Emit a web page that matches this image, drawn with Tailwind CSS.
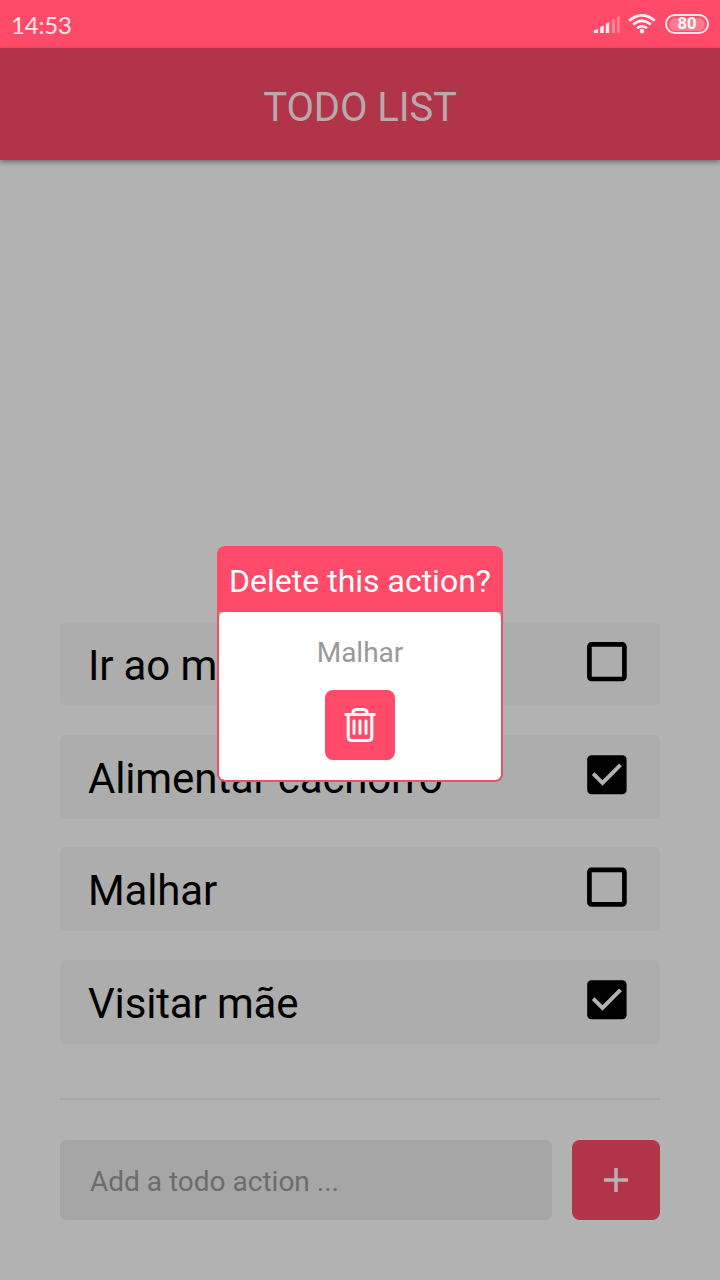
<!DOCTYPE html>
<html lang="pt">
<head>
<meta charset="utf-8">
<title>Todo List</title>
<script src="https://cdn.jsdelivr.net/npm/@tailwindcss/browser@4"></script>
</head>
<body class="w-[720px] h-[1280px] overflow-hidden bg-[#b2b2b2] font-[Roboto,sans-serif] relative flex flex-col">
  <!-- Status bar -->
  <div class="h-12 shrink-0 bg-[#ff4b69] flex items-center justify-between pl-[11px] pr-[11px]">
    <span class="font-[Lato,sans-serif] text-[24px] leading-none text-[#ffe4e8] tracking-[-0.2px] pt-[2px]">14:53</span>
    <div class="flex items-center">
      <svg class="w-[28px] h-5" viewBox="0 0 28 20" fill="#ffe9ec">
        <path d="M.8 19v-1.800q0-1 1-1.300l3.400-1V19z"/>
        <path d="M7.200 19v-6l3.600-1.500V19z"/>
        <path d="M12.800 19V9.700l3.400-1.500V19z"/>
        <path d="M18.800 19V6l3.300-1.300V19z" opacity=".35"/>
        <path d="M24 19V3l2.600-1.200V19z" opacity=".35"/>
      </svg>
      <svg class="w-[28px] h-5 ml-[7px]" viewBox="0 0 28 20" fill="none" stroke="#ffeff1" stroke-width="2.700">
        <path d="M1.200 6.800Q14-4.300 26.800 6.800"/>
        <path d="M5.200 10.600Q14 3 22.800 10.600"/>
        <path d="M9 14.300Q14 9.900 19 14.300"/>
        <circle cx="14" cy="17.100" r="2.300" fill="#ffeff1" stroke="none"/>
      </svg>
      <div class="ml-[9px] w-[44px] h-5 rounded-full border-2 border-[#ffe6ea] flex items-center p-[2px]">
        <div class="w-full h-[13px] rounded-full bg-[#ff7b90] flex items-center justify-center"><span class="text-[16.5px] leading-none font-bold text-white">80</span></div>
      </div>
    </div>
  </div>
  <!-- App header -->
  <header class="h-28 shrink-0 bg-[#b13449] flex items-center justify-center shadow-[0_2px_5px_rgba(0,0,0,0.4)]">
    <h1 class="text-[40px] leading-none text-[#b9a9ab] pt-[8px] tracking-[-0.1px]">TODO LIST</h1>
  </header>
  <!-- Todo items -->
  <main class="flex-1 flex flex-col justify-end px-[60px] pb-[60px]">
    <ul class="flex flex-col gap-[28.67px]">
      <li class="h-[84px] rounded-md bg-[#adadad] flex items-center justify-between pl-7 pr-[33px]">
        <span class="text-[42px] leading-none text-black pt-[3px] tracking-[-0.15px]">Ir ao m</span>
        <svg class="w-10 h-10 mb-[4px]" viewBox="0 0 40 40"><rect x="2.400" y="2.400" width="35" height="34.600" rx="2.200" fill="none" stroke="#000" stroke-width="4.700"/></svg>
      </li>
      <li class="h-[84px] rounded-md bg-[#adadad] flex items-center justify-between pl-7 pr-[33px]">
        <span class="text-[42px] leading-none text-black pt-[4px] tracking-[-0.15px]">Alimentar cachorro</span>
        <svg class="w-10 h-10 mb-[4px]" viewBox="0 0 40 40"><rect x=".2" y=".2" width="39.400" height="39" rx="4.200"/><path d="M6.200 18.600l9.300 9.300L33.500 9.900" fill="none" stroke="#b2b2b2" stroke-width="3.900"/></svg>
      </li>
      <li class="h-[84px] rounded-md bg-[#adadad] flex items-center justify-between pl-7 pr-[33px]">
        <span class="text-[42px] leading-none text-black pt-[3px] tracking-[-0.15px]">Malhar</span>
        <svg class="w-10 h-10 mb-[4px]" viewBox="0 0 40 40"><rect x="2.400" y="2.800" width="35" height="34.600" rx="2.200" fill="none" stroke="#000" stroke-width="4.700"/></svg>
      </li>
      <li class="h-[84px] rounded-md bg-[#adadad] flex items-center justify-between pl-7 pr-[33px]">
        <span class="text-[42px] leading-none text-black pt-[3px] tracking-[-0.15px]">Visitar mãe</span>
        <svg class="w-10 h-10 mb-[4px]" viewBox="0 0 40 40"><rect x=".2" y=".2" width="39.400" height="39" rx="4.200"/><path d="M6.200 18.600l9.300 9.300L33.500 9.900" fill="none" stroke="#b2b2b2" stroke-width="3.900"/></svg>
      </li>
    </ul>
    <div class="h-[2px] mt-[54px] bg-[#a6a6a6]"></div>
    <div class="mt-10 h-20 flex gap-5">
      <div class="flex-1 rounded-md bg-[#a6a6a6] flex items-center pl-[30px]"><span class="text-[28px] leading-none text-[#6c6c6c] pt-[3px]">Add a todo action ...</span></div>
      <div class="w-[88px] rounded-lg bg-[#b13449] flex items-center justify-center">
        <svg class="w-6 h-6" viewBox="0 0 24 24" stroke="#bbb0b2" stroke-width="3.400"><path d="M12 0v24M0 12h24"/></svg>
      </div>
    </div>
  </main>
  <!-- Delete confirmation dialog -->
  <div class="absolute left-[217px] top-[546px] w-[286px] h-[236px] rounded-lg flex flex-col">
    <div class="h-[66px] shrink-0 rounded-t-lg bg-[#ff4b69] flex items-center justify-center"><span class="text-[32px] leading-none text-white pt-[4px] whitespace-nowrap">Delete this action?</span></div>
    <div class="flex-1 border-2 border-t-0 border-[#f04d69] rounded-b-lg rounded-t-none">
      <div class="h-full bg-white rounded-md flex flex-col items-center pt-[27px]">
        <span class="text-[28px] leading-7 text-[#999]">Malhar</span>
        <div class="mt-[23px] w-[70px] h-[70px] rounded-lg bg-[#ff4b69] flex items-center justify-center">
          <svg class="w-8 h-9" viewBox="0 0 32 36" fill="none" stroke="#fff" stroke-width="3">
            <path d="M.5 7.500h31M9 7V5.500Q9 2.500 12.500 2.500h7Q23 2.500 23 5.500V7M4.200 7.500v22.500q0 3.500 3.500 3.500h16.600q3.500 0 3.500-3.500V7.500"/>
            <path d="M10 14v12.500M16 14v12.500M22 14v12.500" stroke-linecap="round" stroke-width="2.900"/>
          </svg>
        </div>
      </div>
    </div>
  </div>
</body>
</html>
